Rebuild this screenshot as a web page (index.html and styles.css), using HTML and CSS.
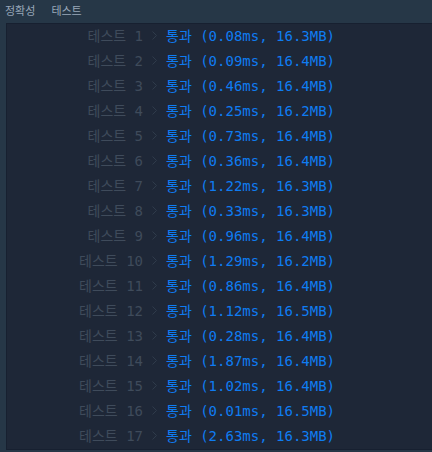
FILE: index.html
```html
<!DOCTYPE html>
<html lang="ko">
<head>
    <meta charset="UTF-8">
    <title>채점 결과</title>
    <link rel="stylesheet" href="styles.css">
</head>
<body>
    <div class="tabs">
        <span class="tab">정확성</span>
        <span class="tab">테스트</span>
    </div>
    <div class="console">
        <div class="row"><span class="label">테스트 1</span><svg class="arrow" viewBox="0 0 5 9"><path d="M0.5 0.5 L4.5 4.5 L0.5 8.5"/></svg><span class="result">통과 (0.08ms, 16.3MB)</span></div>
        <div class="row"><span class="label">테스트 2</span><svg class="arrow" viewBox="0 0 5 9"><path d="M0.5 0.5 L4.5 4.5 L0.5 8.5"/></svg><span class="result">통과 (0.09ms, 16.4MB)</span></div>
        <div class="row"><span class="label">테스트 3</span><svg class="arrow" viewBox="0 0 5 9"><path d="M0.5 0.5 L4.5 4.5 L0.5 8.5"/></svg><span class="result">통과 (0.46ms, 16.4MB)</span></div>
        <div class="row"><span class="label">테스트 4</span><svg class="arrow" viewBox="0 0 5 9"><path d="M0.5 0.5 L4.5 4.5 L0.5 8.5"/></svg><span class="result">통과 (0.25ms, 16.2MB)</span></div>
        <div class="row"><span class="label">테스트 5</span><svg class="arrow" viewBox="0 0 5 9"><path d="M0.5 0.5 L4.5 4.5 L0.5 8.5"/></svg><span class="result">통과 (0.73ms, 16.4MB)</span></div>
        <div class="row"><span class="label">테스트 6</span><svg class="arrow" viewBox="0 0 5 9"><path d="M0.5 0.5 L4.5 4.5 L0.5 8.5"/></svg><span class="result">통과 (0.36ms, 16.4MB)</span></div>
        <div class="row"><span class="label">테스트 7</span><svg class="arrow" viewBox="0 0 5 9"><path d="M0.5 0.5 L4.5 4.5 L0.5 8.5"/></svg><span class="result">통과 (1.22ms, 16.3MB)</span></div>
        <div class="row"><span class="label">테스트 8</span><svg class="arrow" viewBox="0 0 5 9"><path d="M0.5 0.5 L4.5 4.5 L0.5 8.5"/></svg><span class="result">통과 (0.33ms, 16.3MB)</span></div>
        <div class="row"><span class="label">테스트 9</span><svg class="arrow" viewBox="0 0 5 9"><path d="M0.5 0.5 L4.5 4.5 L0.5 8.5"/></svg><span class="result">통과 (0.96ms, 16.4MB)</span></div>
        <div class="row"><span class="label">테스트 10</span><svg class="arrow" viewBox="0 0 5 9"><path d="M0.5 0.5 L4.5 4.5 L0.5 8.5"/></svg><span class="result">통과 (1.29ms, 16.2MB)</span></div>
        <div class="row"><span class="label">테스트 11</span><svg class="arrow" viewBox="0 0 5 9"><path d="M0.5 0.5 L4.5 4.5 L0.5 8.5"/></svg><span class="result">통과 (0.86ms, 16.4MB)</span></div>
        <div class="row"><span class="label">테스트 12</span><svg class="arrow" viewBox="0 0 5 9"><path d="M0.5 0.5 L4.5 4.5 L0.5 8.5"/></svg><span class="result">통과 (1.12ms, 16.5MB)</span></div>
        <div class="row"><span class="label">테스트 13</span><svg class="arrow" viewBox="0 0 5 9"><path d="M0.5 0.5 L4.5 4.5 L0.5 8.5"/></svg><span class="result">통과 (0.28ms, 16.4MB)</span></div>
        <div class="row"><span class="label">테스트 14</span><svg class="arrow" viewBox="0 0 5 9"><path d="M0.5 0.5 L4.5 4.5 L0.5 8.5"/></svg><span class="result">통과 (1.87ms, 16.4MB)</span></div>
        <div class="row"><span class="label">테스트 15</span><svg class="arrow" viewBox="0 0 5 9"><path d="M0.5 0.5 L4.5 4.5 L0.5 8.5"/></svg><span class="result">통과 (1.02ms, 16.4MB)</span></div>
        <div class="row"><span class="label">테스트 16</span><svg class="arrow" viewBox="0 0 5 9"><path d="M0.5 0.5 L4.5 4.5 L0.5 8.5"/></svg><span class="result">통과 (0.01ms, 16.5MB)</span></div>
        <div class="row"><span class="label">테스트 17</span><svg class="arrow" viewBox="0 0 5 9"><path d="M0.5 0.5 L4.5 4.5 L0.5 8.5"/></svg><span class="result">통과 (2.63ms, 16.3MB)</span></div>
    </div>
</body>
</html>
```

FILE: styles.css
```css
body {
    margin: 0;
    background: #263747;
    overflow: hidden;
    font-family: "DejaVu Sans Mono", "Noto Sans CJK KR", monospace;
}
.tabs {
    height: 23px;
    display: flex;
    align-items: center;
    gap: 16px;
    padding-left: 5px;
    font-family: "Noto Sans CJK KR", sans-serif;
    font-size: 11px;
    color: #98a8b9;
    line-height: 1;
    padding-bottom: 3px;
    box-sizing: border-box;
}
.console {
    margin-left: 6px;
    margin-right: -10px;
    background: #1e2737;
    border: 1px solid #172030;
}
.row {
    display: grid;
    grid-template-columns: 136px 23px auto;
    height: 25px;
    padding-bottom: 4px;
    box-sizing: border-box;
    align-items: center;
    font-size: 14px;
    white-space: pre;
}
.label {
    text-align: right;
    color: #3f4b5b;
}
.arrow {
    width: 5px;
    height: 9px;
    margin-left: 9px;
    margin-top: 1px;
    fill: none;
    stroke: #2f3b4b;
    stroke-width: 1;
}
.result {
    color: #0f7cf2;
}
```
